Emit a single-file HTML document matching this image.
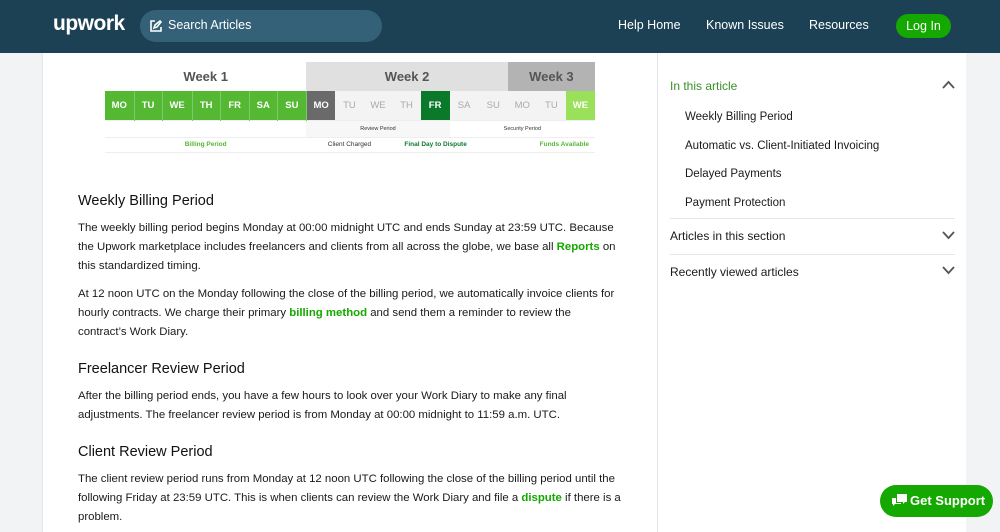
<!DOCTYPE html>
<html><head><meta charset="utf-8"><style>
*{margin:0;padding:0;box-sizing:border-box}
body{width:1000px;height:532px;overflow:hidden;background:#f2f3f5;font-family:"Liberation Sans",sans-serif;color:#1a1a1a;position:relative}
.hdr{position:absolute;left:0;top:0;width:1000px;height:53px;background:#1d4154}
.logo{position:absolute;left:53px;top:12px;color:#fff;font-size:21px;font-weight:bold;letter-spacing:-0.5px}
.search{position:absolute;left:140px;top:10px;width:242px;height:32px;border-radius:16px;background:#346178;color:#fff;font-size:12.5px;padding:8px 0 0 28px}
.search svg{position:absolute;left:10px;top:10px}
.nav{position:absolute;top:18px;color:#fff;font-size:12.5px}
.login{position:absolute;left:896px;top:14px;width:55px;height:24px;border-radius:12px;background:#14a800;color:#fff;font-size:12.5px;text-align:center;line-height:24px}
.main{position:absolute;left:42px;top:53px;width:616px;height:479px;background:#fff;border-left:1px solid #e4e6e9;border-right:1px solid #e4e6e9}
.side{position:absolute;left:658px;top:53px;width:308px;height:479px;background:#fff}
table{position:absolute;left:105px;top:62px;border-collapse:collapse;width:490px;font-weight:bold;table-layout:fixed}
td{text-align:center;padding:0;overflow:hidden;white-space:nowrap}
.wk td{height:29px;font-size:13px;color:#555}
.dy td{height:29px;font-size:9.5px;color:#fff;border-right:1px solid #7cc86c}
.sm td{height:17px;font-size:5.5px;color:#333;font-weight:normal;border-top:1px solid #eee}
.lb td{height:15px;font-size:6.5px;border-top:1px solid #eee;border-bottom:1px solid #eee}
.art{position:absolute;left:78px;width:560px;font-size:11.4px;line-height:18.8px;color:#1a1a1a;white-space:nowrap}
h2{position:absolute;left:78px;font-size:14.5px;font-weight:normal;color:#111}
a{color:#14a800;text-decoration:none;font-weight:bold}
.si{position:absolute;left:685px;font-size:11.5px;color:#1a1a1a}
.sh{position:absolute;left:670px;font-size:12px;color:#1a1a1a}
.hr{position:absolute;left:670px;width:285px;height:1px;background:#e4e6e9}
.chev{position:absolute;left:942px}
.gs{position:absolute;left:880px;top:485px;width:113px;height:32px;border-radius:16px;background:#14a800;color:#fff;font-size:13px;font-weight:bold;line-height:32px;padding-left:30px}
</style></head><body>
<div class="hdr">
<div class="logo">upwork</div>
<div class="search"><svg width="12" height="12" viewBox="0 0 12 12" fill="none" stroke="#fff" stroke-width="1.6"><path d="M5 1H1v10h10V7"/><path d="M4 8l1-3 5-4 1 1-4 5z"/></svg>Search Articles</div>
<div class="nav" style="left:618px">Help Home</div>
<div class="nav" style="left:706px">Known Issues</div>
<div class="nav" style="left:809px">Resources</div>
<div class="login">Log In</div>
</div>
<div class="main"></div>
<div class="side"></div>
<table>
<colgroup><col style="width:29px"><col style="width:28px"><col style="width:30px"><col style="width:28px"><col style="width:29px"><col style="width:28px"><col style="width:29px"><col style="width:29px"><col style="width:28px"><col style="width:29px"><col style="width:28px"><col style="width:29px"><col style="width:29px"><col style="width:29px"><col style="width:29px"><col style="width:29px"><col style="width:29px"></colgroup>
<tr class="wk"><td colspan="7" style="background:#fff">Week 1</td><td colspan="7" style="background:#e0e0e0">Week 2</td><td colspan="3" style="background:#b3b3b3">Week 3</td></tr>
<tr class="dy">
<td style="background:#54b832">MO</td><td style="background:#54b832">TU</td><td style="background:#54b832">WE</td><td style="background:#54b832">TH</td><td style="background:#54b832">FR</td><td style="background:#54b832">SA</td><td style="background:#54b832">SU</td>
<td style="background:#6a6a6a;border:0">MO</td><td style="background:#f3f3f3;color:#aaa;border:0;font-weight:normal">TU</td><td style="background:#f3f3f3;color:#aaa;border:0;font-weight:normal">WE</td><td style="background:#f3f3f3;color:#aaa;border:0;font-weight:normal">TH</td><td style="background:#0a7a2a;border:0">FR</td><td style="background:#f3f3f3;color:#aaa;border:0;font-weight:normal">SA</td><td style="background:#f3f3f3;color:#aaa;border:0;font-weight:normal">SU</td><td style="background:#f3f3f3;color:#aaa;border:0;font-weight:normal">MO</td><td style="background:#f3f3f3;color:#aaa;border:0;font-weight:normal">TU</td><td style="background:#9be05a;border:0">WE</td></tr>
<tr class="sm"><td colspan="7"></td><td colspan="5" style="background:#f7f7f7">Review Period</td><td colspan="5">Security Period</td></tr>
<tr class="lb"><td colspan="7" style="color:#54b832">Billing Period</td><td colspan="3" style="color:#333;font-weight:normal">Client Charged</td><td colspan="3" style="color:#0a7a2a">Final Day to Dispute</td><td colspan="4" style="color:#54b832;text-align:right;padding-right:6px">Funds Available</td></tr>
</table>
<h2 style="top:193px">Weekly Billing Period</h2>
<div class="art" style="top:219px">The weekly billing period begins Monday at 00:00 midnight UTC and ends Sunday at 23:59 UTC. Because<br>the Upwork marketplace includes freelancers and clients from all across the globe, we base all <a>Reports</a> on<br>this standardized timing.</div>
<div class="art" style="top:285px">At 12 noon UTC on the Monday following the close of the billing period, we automatically invoice clients for<br>hourly contracts. We charge their primary <a>billing method</a> and send them a reminder to review the<br>contract’s Work Diary.</div>
<h2 style="top:361px">Freelancer Review Period</h2>
<div class="art" style="top:387px">After the billing period ends, you have a few hours to look over your Work Diary to make any final<br>adjustments. The freelancer review period is from Monday at 00:00 midnight to 11:59 a.m. UTC.</div>
<h2 style="top:444px">Client Review Period</h2>
<div class="art" style="top:470px">The client review period runs from Monday at 12 noon UTC following the close of the billing period until the<br>following Friday at 23:59 UTC. This is when clients can review the Work Diary and file a <a>dispute</a> if there is a<br>problem.</div>
<div class="sh" style="top:79px;color:#3a8f2a">In this article</div>
<svg class="chev" style="top:80px" width="13" height="9" viewBox="0 0 13 9" fill="none" stroke="#555" stroke-width="1.8"><path d="M1 8l5.5-6 5.5 6"/></svg>
<div class="si" style="top:111px">Weekly Billing Period</div>
<div class="si" style="top:140px">Automatic vs. Client-Initiated Invoicing</div>
<div class="si" style="top:168px">Delayed Payments</div>
<div class="si" style="top:197px">Payment Protection</div>
<div class="hr" style="top:218px"></div>
<div class="sh" style="top:229px">Articles in this section</div>
<svg class="chev" style="top:231px" width="13" height="9" viewBox="0 0 13 9" fill="none" stroke="#555" stroke-width="1.8"><path d="M1 1l5.5 6 5.5-6"/></svg>
<div class="hr" style="top:254px"></div>
<div class="sh" style="top:265px">Recently viewed articles</div>
<svg class="chev" style="top:266px" width="13" height="9" viewBox="0 0 13 9" fill="none" stroke="#555" stroke-width="1.8"><path d="M1 1l5.5 6 5.5-6"/></svg>
<div class="gs"><svg style="position:absolute;left:12px;top:9px" width="15" height="14" viewBox="0 0 15 14" fill="#fff"><path d="M5 0h10v8h-2l-2 2V8H5z"/><path d="M0 4h4v5h5v1H3l-2 2v-2H0z"/></svg>Get Support</div>
</body></html>
